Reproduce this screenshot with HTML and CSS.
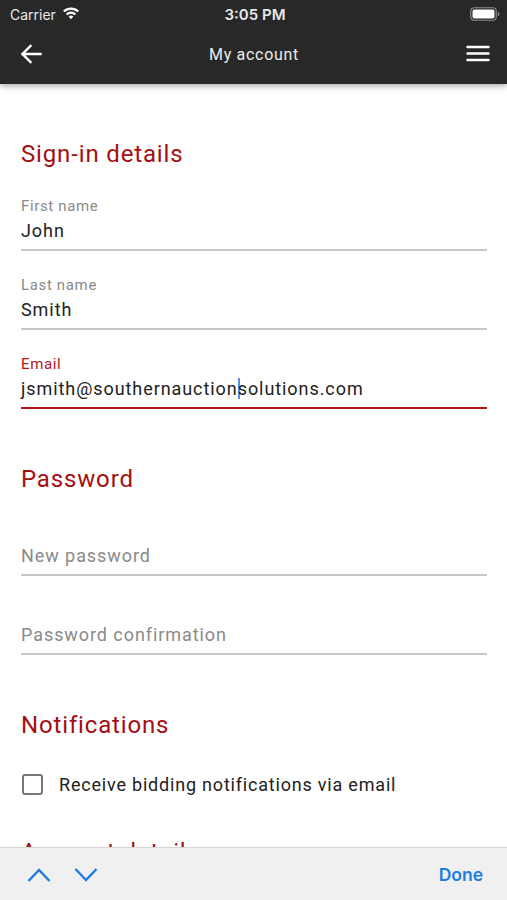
FILE: index.html
```html
<!DOCTYPE html>
<html lang="en">
<head>
    <meta charset="UTF-8">
    <meta name="viewport" content="width=device-width, initial-scale=1.0">
    <title>My account</title>
    <link rel="stylesheet" href="styles.css">
</head>
<body>
    <header class="app-header">
        <div class="status-bar">
            <div class="status-left">
                <span>Carrier</span>
                <svg class="wifi" width="18" height="14" viewBox="0 0 18 14">
                    <path d="M9 13.2 L6.6 10.6 A3.4 3.4 0 0 1 11.4 10.6 Z" fill="#fff"/>
                    <path d="M4.6 8.5 A6.2 6.2 0 0 1 13.4 8.5" stroke="#fff" stroke-width="2.1" fill="none"/>
                    <path d="M1.8 5.6 A10.2 10.2 0 0 1 16.2 5.6" stroke="#fff" stroke-width="2.1" fill="none"/>
                </svg>
            </div>
            <span class="status-time">3:05 PM</span>
            <div class="status-right">
                <svg width="30" height="14" viewBox="0 0 30 14">
                    <rect x="0.75" y="0.75" width="25.5" height="12.5" rx="3.5" fill="none" stroke="#8a8a8a" stroke-width="1.2"/>
                    <rect x="2.5" y="2.5" width="22" height="9" rx="2" fill="#fff"/>
                    <path d="M27.8 4.8 Q29.5 5.2 29.5 7 Q29.5 8.8 27.8 9.2 Z" fill="#8a8a8a"/>
                </svg>
            </div>
        </div>
        <nav class="nav-bar">
            <svg class="nav-icon" width="22" height="20" viewBox="0 0 22 20">
                <path d="M20.5 10 H2.5 M10.5 2 L2.5 10 L10.5 18" stroke="#fff" stroke-width="2.4" fill="none" stroke-linecap="square"/>
            </svg>
            <h1 class="nav-title">My account</h1>
            <svg class="nav-icon" width="24" height="18" viewBox="0 0 24 18">
                <path d="M1.5 2 H22.5 M1.5 8.5 H22.5 M1.5 15 H22.5" stroke="#fff" stroke-width="2.4" stroke-linecap="round"/>
            </svg>
        </nav>
    </header>

    <main class="content">
        <section class="form-section">
            <h2 class="section-title">Sign-in details</h2>
            <div class="field">
                <label class="field-label">First name</label>
                <div class="field-value">John</div>
            </div>
            <div class="field">
                <label class="field-label">Last name</label>
                <div class="field-value">Smith</div>
            </div>
            <div class="field focused">
                <label class="field-label">Email</label>
                <div class="field-value">jsmith@southernauction<span class="caret"></span>solutions.com</div>
            </div>
        </section>

        <section class="form-section">
            <h2 class="section-title">Password</h2>
            <div class="field">
                <label class="field-label"></label>
                <div class="field-value placeholder">New password</div>
            </div>
            <div class="field">
                <label class="field-label"></label>
                <div class="field-value placeholder">Password confirmation</div>
            </div>
        </section>

        <section class="form-section">
            <h2 class="section-title">Notifications</h2>
            <label class="check-row">
                <span class="checkbox"></span>
                <span>Receive bidding notifications via email</span>
            </label>
        </section>

        <section class="form-section tight">
            <h2 class="section-title">Account details</h2>
        </section>
    </main>

    <div class="keyboard-bar">
        <div class="arrows">
            <svg width="24" height="16" viewBox="0 0 24 16">
                <path d="M1.5 14 L12 3 L22.5 14" stroke="#1f7ae3" stroke-width="2.4" fill="none"/>
            </svg>
            <svg width="24" height="16" viewBox="0 0 24 16">
                <path d="M1.5 2 L12 13 L22.5 2" stroke="#1f7ae3" stroke-width="2.4" fill="none"/>
            </svg>
        </div>
        <button class="done-btn">Done</button>
    </div>
</body>
</html>
```

FILE: styles.css
```css
* {
    box-sizing: border-box;
    margin: 0;
    padding: 0;
}
body {
    font-family: Roboto, 'Noto Sans', sans-serif;
    background: #fff;
    color: #212121;
    height: 900px;
    overflow: hidden;
}
.app-header {
    background: #282828;
    color: #fff;
    box-shadow: 0 2px 6px rgba(0,0,0,0.35);
    position: relative;
    z-index: 1;
}
.status-bar {
    height: 28px;
    display: flex;
    align-items: center;
    justify-content: space-between;
    padding: 0 7px 0 10px;
    font-family: Inter, 'Liberation Sans', sans-serif;
    font-size: 14px;
    color: #e8e8e8;
}
.status-left {
    display: flex;
    align-items: center;
    gap: 6px;
    width: 100px;
}
.wifi {
    margin-top: -3px;
}
.status-time {
    font-weight: 600;
    font-size: 15px;
}
.status-right {
    width: 100px;
    display: flex;
    justify-content: flex-end;
    margin-top: -1px;
}
.nav-bar {
    height: 56px;
    display: flex;
    align-items: center;
    justify-content: space-between;
    padding: 0 17px 0 20px;
}
.nav-title {
    font-size: 16px;
    font-weight: 400;
    letter-spacing: 0.7px;
    color: #ececec;
    margin-top: -4px;
}
.nav-icon {
    margin-top: -4px;
}
.content {
    padding: 0 20px 0 21px;
}
.form-section {
    padding-top: 54px;
}
.form-section.tight {
    padding-top: 34px;
}
.section-title {
    font-size: 24px;
    line-height: 32px;
    font-weight: 400;
    letter-spacing: 0.85px;
    color: #a30f10;
    margin-bottom: 25px;
}
.field {
    border-bottom: 2px solid #c8c8c8;
    padding-bottom: 6px;
    margin-bottom: 23px;
}
.field:last-child {
    margin-bottom: 0;
}
.field-label {
    display: block;
    height: 21px;
    padding-top: 1px;
    font-size: 15px;
    line-height: 20px;
    letter-spacing: 0.65px;
    color: #8a8a8a;
    margin-bottom: 3px;
}
.field-value {
    font-size: 18px;
    line-height: 24px;
    letter-spacing: 0.93px;
    color: #212121;
}
.field-value.placeholder {
    color: #8a8a8a;
}
.field.focused {
    border-bottom-color: #b3171b;
}
.field.focused .field-label {
    color: #b3171b;
}
.caret {
    display: inline-block;
    width: 2px;
    height: 21px;
    background: #5b8ef2;
    vertical-align: -4px;
    margin-right: -2px;
}
.check-row {
    display: flex;
    align-items: center;
    gap: 16px;
    height: 36px;
    font-size: 18px;
    letter-spacing: 0.8px;
    color: #212121;
}
.checkbox {
    width: 21px;
    height: 21px;
    margin-left: 1px;
    border: 2px solid #777;
    border-radius: 3px;
}
.keyboard-bar {
    position: fixed;
    left: 0;
    right: 0;
    bottom: 0;
    height: 53px;
    background: #f0f0f0;
    border-top: 1px solid #d4d4d4;
    display: flex;
    align-items: center;
    justify-content: space-between;
    padding: 0 24px 0 27px;
}
.arrows {
    display: flex;
    gap: 23px;
    margin-top: 1px;
}
.done-btn {
    background: none;
    border: none;
    font-family: Inter, 'Liberation Sans', sans-serif;
    font-size: 17.5px;
    font-weight: 600;
    color: #1a7ee6;
}
```
